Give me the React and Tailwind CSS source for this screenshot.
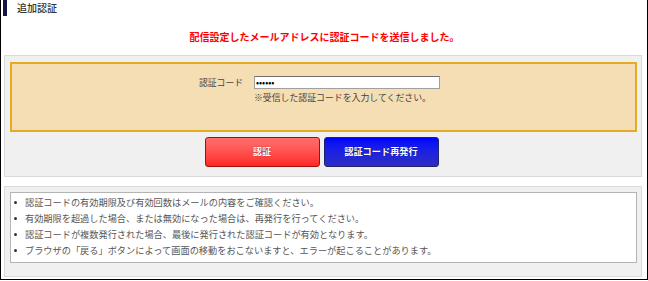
import React from "react";

const jp = { fontFamily: '"Noto Sans CJK JP", "Noto Sans", sans-serif' };

const notes = [
  "認証コードの有効期限及び有効回数はメールの内容をご確認ください。",
  "有効期限を超過した場合、または無効になった場合は、再発行を行ってください。",
  "認証コードが複数発行された場合、最後に発行された認証コードが有効となります。",
  "ブラウザの「戻る」ボタンによって画面の移動をおこないますと、エラーが起こることがあります。",
];

export default function App() {
  return (
    <div
      style={jp}
      className="w-[648px] h-[280px] bg-white border-x border-b border-black text-[#333]"
    >
      {/* title */}
      <div className="flex items-start h-[20px]">
        <div className="ml-[2px] w-[4px] h-[16px] bg-[#14144a]" />
        <h1 className="ml-[10px] text-[10px] leading-[16px] font-medium text-[#333]">追加認証</h1>
      </div>

      <p className="mt-[10px] text-center text-[10px] leading-[14px] font-bold text-[#ff0000] pl-[1px]">
        配信設定したメールアドレスに認証コードを送信しました。
      </p>

      {/* form section */}
      <div className="mt-[11px] ml-[3px] mr-[5px] bg-[#f0f0f0] border border-[#dadada] pl-[5px] pr-[4px] pt-[6px] pb-[9px]">
        <div className="h-[70px] bg-[#f5deb3] border-2 border-[#e4ac22] pt-[12px] pl-[187px]">
          <div className="flex items-start">
            <label className="text-[8.8px] leading-[13px] text-[#444]">認証コード</label>
            <div className="ml-[11px]">
              <input
                type="password"
                readOnly
                defaultValue="abcdef"
                className="block w-[186px] h-[13px] bg-white border border-[#a0a0a0] border-t-[#707070] px-[1px] text-[9px] leading-[11px] text-black outline-none"
              />
              <p className="mt-[3px] text-[8.9px] leading-[12px] text-[#444]">
                ※受信した認証コードを入力してください。
              </p>
            </div>
          </div>
        </div>

        <div className="mt-[5px] flex justify-center gap-[4px] pr-[4px]">
          <button className="w-[115px] h-[30px] rounded-[3px] border border-[#a01010] bg-gradient-to-b from-[#ff6e6e] to-[#ff2424] text-white text-[9.2px] font-bold [text-shadow:0_0_1px_#600]">
            認証
          </button>
          <button className="w-[115px] h-[30px] rounded-[3px] border border-[#22226a] bg-gradient-to-b from-[#0000ff] to-[#2c2cc4] text-white text-[9.2px] font-bold [text-shadow:0_0_1px_#003]">
            認証コード再発行
          </button>
        </div>
      </div>

      {/* notes section */}
      <div className="mt-[9px] ml-[3px] mr-[5px] bg-[#f0f0f0] border border-[#dadada] pl-[5px] pr-[4px] pt-[5px] pb-[13px]">
        <ul className="h-[71px] bg-white border border-[#b4b4b4] pt-[1px] pl-[3px]">
          {notes.map((n) => (
            <li key={n} className="flex items-center h-[16px]">
              <span className="w-[3px] h-[3px] rounded-full bg-[#333]" />
              <span className="ml-[8px] text-[9.2px] leading-[16px] text-[#555] whitespace-nowrap">
                {n}
              </span>
            </li>
          ))}
        </ul>
      </div>
    </div>
  );
}
